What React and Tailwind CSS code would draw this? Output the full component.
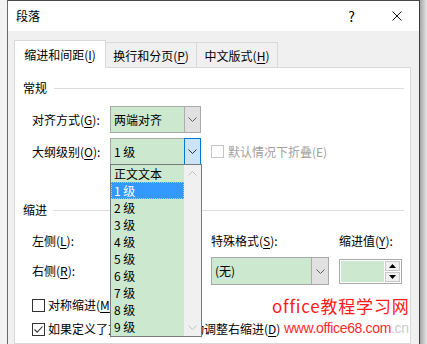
import React from 'react';

const font = "font-['Noto_Sans_CJK_SC','Noto_Sans',sans-serif]";

function Chevron({ up = false, color = '#606060' }) {
  return (
    <svg width="9" height="5" viewBox="0 0 9 5">
      <path
        d={up ? 'M0.5 4.5 L4.5 0.5 L8.5 4.5' : 'M0.5 0.5 L4.5 4.5 L8.5 0.5'}
        fill="none"
        stroke={color}
        strokeWidth="1"
      />
    </svg>
  );
}

function Key({ k }) {
  return (
    <>
      (<span className="underline underline-offset-2">{k}</span>)
    </>
  );
}

function Combo({ width, text, active = false }) {
  return (
    <div className={`${width} h-[27px] flex border border-[#a9a9a9] bg-[#cce8cf]`}>
      <div className="flex-1 flex items-center pl-[3px] text-[12px] text-black">{text}</div>
      {active ? (
        <div className="w-[17px] flex items-center justify-center bg-[#cce4f7] border border-[#0078d7] -my-px -mr-px">
          <Chevron color="#333333" />
        </div>
      ) : (
        <div className="w-[16px] flex items-center justify-center bg-[#e1e1e1] border-l border-[#adadad]">
          <Chevron />
        </div>
      )}
    </div>
  );
}

function CheckBox({ checked = false, disabled = false }) {
  return (
    <div
      className={`w-[13px] h-[13px] border bg-white flex items-center justify-center ${
        disabled ? 'border-[#c4c4c4]' : 'border-[#333333]'
      }`}
    >
      {checked && (
        <svg width="11" height="11" viewBox="0 0 11 11">
          <path d="M1.5 5.5 L4.2 8.2 L9.5 2.5" fill="none" stroke="#333333" strokeWidth="1.1" />
        </svg>
      )}
    </div>
  );
}

const levels = ['正文文本', '1 级', '2 级', '3 级', '4 级', '5 级', '6 级', '7 级', '8 级', '9 级'];

export default function App() {
  return (
    <div className={`relative w-[427px] h-[344px] overflow-hidden flex bg-[#f3f3f3] ${font}`}>
      <div className="w-[7px] shrink-0" />

      {/* Dialog window */}
      <div className="w-[413px] shrink-0 flex flex-col border-l border-r border-t border-l-[#6a6a6a] border-r-[#3c3c3c] border-t-[#4a4a4a] bg-[#f0f0f0]">
        {/* Title bar */}
        <div className="h-[30px] bg-white flex items-center pl-[8px] text-black">
          <span className="text-[12px] leading-[16px]">段落</span>
          <span className="ml-auto text-[14px] leading-[16px]">?</span>
          <svg className="ml-[37px] mr-[17px]" width="10" height="10" viewBox="0 0 10 10">
            <path d="M0.5 0.5 L9.5 9.5 M9.5 0.5 L0.5 9.5" stroke="#111111" strokeWidth="1" />
          </svg>
        </div>

        {/* Tabs */}
        <div className="pt-[9px] pl-[6px] h-[36px] flex items-start text-[12px] leading-[16px] text-black">
          <div className="relative z-10 w-[92px] h-[28px] bg-white border-t border-l border-r border-[#d9d9d9] flex items-center justify-center">
            缩进和间距<Key k="I" />
          </div>
          <div className="mt-[2px] w-[91px] h-[25px] border-t border-r border-[#d9d9d9] flex items-center justify-center pt-[2px]">
            换行和分页<Key k="P" />
          </div>
          <div className="mt-[2px] w-[81px] h-[25px] border-t border-r border-[#d9d9d9] flex items-center justify-center pt-[2px]">
            中文版式<Key k="H" />
          </div>
        </div>

        {/* Panel */}
        <div className="relative ml-[6px] w-[397px] flex-1 bg-white border border-[#d9d9d9] text-[12px] leading-[16px] text-black">
          {/* 常规 */}
          <div className="mt-[12px] h-[16px] flex items-center pl-[8px] pr-[6px]">
            <span>常规</span>
            <div className="flex-1 ml-[7px] h-px bg-[#dcdcdc]" />
          </div>

          <div className="mt-[10px] h-[27px] flex items-center pl-[17px]">
            <span className="w-[78px]">
              对齐方式<Key k="G" />:
            </span>
            <Combo width="w-[91px]" text="两端对齐" />
          </div>

          <div className="mt-[5px] h-[27px] flex items-center pl-[17px]">
            <span className="w-[78px]">
              大纲级别<Key k="O" />:
            </span>
            <Combo width="w-[91px]" text="1 级" active />
            <div className="ml-[10px]">
              <CheckBox disabled />
            </div>
            <span className="ml-[4px] text-[#a0a0a0]">默认情况下折叠(E)</span>
          </div>

          {/* 缩进 */}
          <div className="mt-[37px] h-[16px] flex items-center pl-[8px] pr-[6px]">
            <span>缩进</span>
            <div className="flex-1 ml-[6px] h-px bg-[#dcdcdc]" />
          </div>

          <div className="mt-[15px] h-[16px] flex items-center pl-[17px]">
            <span className="w-[179px]">
              左侧<Key k="L" />:
            </span>
            <span className="w-[128px]">
              特殊格式<Key k="S" />:
            </span>
            <span>
              缩进值<Key k="Y" />:
            </span>
          </div>

          <div className="mt-[8px] h-[28px] flex items-center pl-[17px]">
            <span className="w-[179px]">
              右侧<Key k="R" />:
            </span>
            <div className="w-[118px] h-[28px] flex border border-[#a9a9a9] bg-[#cce8cf]">
              <div className="flex-1 flex items-center pl-[3px]">(无)</div>
              <div className="w-[17px] flex items-center justify-center bg-[#e1e1e1] border-l border-[#adadad]">
                <Chevron />
              </div>
            </div>
            <div className="ml-[10px] w-[63px] h-[25px] border border-[#a9a9a9] bg-white flex p-px gap-px">
              <div className="flex-1 bg-[#cce8cf]" />
              <div className="w-[15px] flex flex-col gap-px">
                <div className="flex-1 bg-[#f0f0f0] border border-[#c8c8c8] flex items-center justify-center">
                  <svg width="7" height="4" viewBox="0 0 7 4">
                    <path d="M0 4 L3.5 0 L7 4 Z" fill="#000" />
                  </svg>
                </div>
                <div className="flex-1 bg-[#f0f0f0] border border-[#c8c8c8] flex items-center justify-center">
                  <svg width="7" height="4" viewBox="0 0 7 4">
                    <path d="M0 0 L3.5 4 L7 0 Z" fill="#000" />
                  </svg>
                </div>
              </div>
            </div>
          </div>

          <div className="mt-[12px] h-[16px] flex items-center pl-[17px]">
            <CheckBox />
            <span className="ml-[3px]">
              对称缩进<Key k="M" />
            </span>
          </div>

          <div className="mt-[8px] h-[16px] flex items-center pl-[17px]">
            <CheckBox checked />
            <span className="ml-[3px] whitespace-nowrap">
              如果定义了文档网格，则自动调整右缩进<Key k="D" />
            </span>
          </div>

          {/* Open outline-level list */}
          <div className="absolute left-[95px] top-[96px] w-[92px] h-[173px] border border-[#7a7a7a] flex bg-[#cce8cf] z-20">
            <div className="flex-1 flex flex-col">
              {levels.map((l, i) => (
                <div
                  key={l}
                  className={`h-[17px] flex items-center pl-[2px] ${
                    i === 1
                      ? 'bg-[#3399ff] text-white border border-dotted border-[#f0c070]'
                      : 'border border-transparent'
                  }`}
                >
                  {l}
                </div>
              ))}
            </div>
            <div className="w-[17px] bg-[#f0f0f0] flex flex-col items-center justify-between pt-[6px] pb-[6px]">
              <Chevron up color="#c2c2c2" />
              <Chevron color="#c2c2c2" />
            </div>
          </div>
        </div>
      </div>

      <div className="w-[7px] shrink-0 bg-gradient-to-r from-[#a6a6a6] to-[#e6e6e6]" />

      {/* Watermark */}
      <div className="absolute left-[272px] top-[296px] pointer-events-none z-30">
        <div className="text-[17px] leading-[20px] tracking-[0.8px] text-[#ff1a1a]">office教程学习网</div>
        <div className="mt-[4px] ml-[12px] text-[14px] leading-[16px] tracking-[-0.35px] font-['Liberation_Sans',sans-serif] text-[#ff2a2a]">
          www.office68.com<span className="text-[#c9c9c9]">.cn</span>
        </div>
      </div>
    </div>
  );
}
